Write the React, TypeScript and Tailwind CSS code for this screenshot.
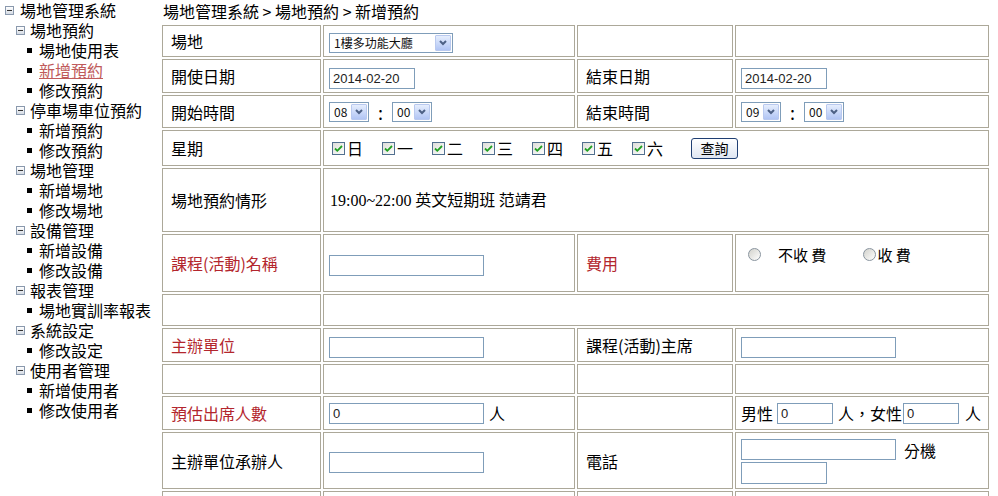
import React from 'react';

type TreeNode = { label: string; level: 0 | 1 | 2; active?: boolean };

const tree: TreeNode[] = [
  { label: '場地管理系統', level: 0 },
  { label: '場地預約', level: 1 },
  { label: '場地使用表', level: 2 },
  { label: '新增預約', level: 2, active: true },
  { label: '修改預約', level: 2 },
  { label: '停車場車位預約', level: 1 },
  { label: '新增預約', level: 2 },
  { label: '修改預約', level: 2 },
  { label: '場地管理', level: 1 },
  { label: '新增場地', level: 2 },
  { label: '修改場地', level: 2 },
  { label: '設備管理', level: 1 },
  { label: '新增設備', level: 2 },
  { label: '修改設備', level: 2 },
  { label: '報表管理', level: 1 },
  { label: '場地實訓率報表', level: 2 },
  { label: '系統設定', level: 1 },
  { label: '修改設定', level: 2 },
  { label: '使用者管理', level: 1 },
  { label: '新增使用者', level: 2 },
  { label: '修改使用者', level: 2 },
];

const weekdays = ['日', '一', '二', '三', '四', '五', '六'];

function MinusBox() {
  return (
    <span className="flex h-[9px] w-[9px] shrink-0 items-center justify-center border border-[#8a99ad] bg-linear-to-b from-white to-[#d5dbe4]">
      <span className="h-px w-[5px] bg-[#333]" />
    </span>
  );
}

function XpSelect({ value, wide }: { value: string; wide?: boolean }) {
  return (
    <span
      className={
        'inline-flex h-[20px] items-center border border-[#7f9db9] bg-white align-middle ' +
        (wide ? 'w-[124px]' : 'w-[40px]')
      }
    >
      <span className="flex-1 pl-[4px] text-[12px] leading-none text-[#111]">{value}</span>
      <span className="mr-px flex h-[16px] w-[16px] items-center justify-center rounded-[1px] border border-[#b9c9ef] bg-linear-to-b from-[#e6eefd] to-[#b1c5f4]">
        <svg width="8" height="6" viewBox="0 0 8 6">
          <path d="M1 1 L4 4 L7 1" fill="none" stroke="#4d6185" strokeWidth="2" />
        </svg>
      </span>
    </span>
  );
}

function TextBox({ value = '', size }: { value?: string; size: 'lg' | 'md' | 'sm' }) {
  const w = size === 'lg' ? 'w-[155px]' : size === 'md' ? 'w-[86px]' : 'w-[56px]';
  return (
    <input
      readOnly
      defaultValue={value}
      className={`${w} h-[21px] border border-[#7f9db9] bg-white px-[3px] align-middle font-['Liberation_Sans',sans-serif] text-[13px] text-[#222] outline-none`}
    />
  );
}

function CheckBox() {
  return (
    <svg width="13" height="13" viewBox="0 0 13 13" className="shrink-0">
      <defs>
        <linearGradient id="cbg" x1="0" y1="0" x2="1" y2="1">
          <stop offset="0" stopColor="#dcdcd7" />
          <stop offset="1" stopColor="#ffffff" />
        </linearGradient>
      </defs>
      <rect x="0.5" y="0.5" width="12" height="12" fill="url(#cbg)" stroke="#52708f" />
      <path d="M3 6.5 L5.3 8.8 L10 4" fill="none" stroke="#21a121" strokeWidth="1.8" />
    </svg>
  );
}

function Radio() {
  return (
    <span className="inline-block h-[13px] w-[13px] shrink-0 rounded-full border border-[#8a959f] bg-linear-to-br from-[#d2d2cc] to-white" />
  );
}

const cell = 'border border-[#aca899] p-0';
const lbl = `${cell} pl-[8px] align-middle`;
const red = `${lbl} text-[#b3262d]`;
const val = `${cell} pl-[5px] align-middle`;

export default function App() {
  return (
    <div className="flex min-h-[496px] bg-white font-['Noto_Sans_CJK_TC',sans-serif] text-[16px] text-black">
      <aside className="w-[160px] shrink-0">
        {tree.map((n, i) => (
          <div key={i} className="flex h-[20px] items-center leading-[20px]">
            {n.level === 0 && (
              <span className="flex items-center pl-[5px]">
                <MinusBox />
                <span className="ml-[6px]">{n.label}</span>
              </span>
            )}
            {n.level === 1 && (
              <span className="flex items-center pl-[16px]">
                <MinusBox />
                <span className="ml-[5px]">{n.label}</span>
              </span>
            )}
            {n.level === 2 && (
              <span className="flex items-center pl-[27px]">
                <span className="h-[5px] w-[5px] bg-black" />
                <span className={'ml-[7px] ' + (n.active ? 'text-[#c05b5b] underline' : '')}>
                  {n.label}
                </span>
              </span>
            )}
          </div>
        ))}
      </aside>

      <main className="flex-1">
        <div className="h-[23px] pl-[3px] pt-[1px] leading-[20px]">場地管理系統 &gt; 場地預約 &gt; 新增預約</div>
        <table className="w-[831px] table-fixed border-separate border-spacing-[2px]">
          <tbody>
            <tr className="h-[32px]">
              <td className={`${lbl} w-[159px]`}>場地</td>
              <td className={`${val} w-[252px]`}>
                <XpSelect value="1樓多功能大廳" wide />
              </td>
              <td className={`${lbl} w-[156px]`} />
              <td className={`${val} w-[254px]`} />
            </tr>
            <tr className="h-[34px]">
              <td className={lbl}>開使日期</td>
              <td className={val}>
                <TextBox value="2014-02-20" size="md" />
              </td>
              <td className={lbl}>結束日期</td>
              <td className={val}>
                <TextBox value="2014-02-20" size="md" />
              </td>
            </tr>
            <tr className="h-[33px]">
              <td className={lbl}>開始時間</td>
              <td className={val}>
                <span className="flex items-center">
                  <XpSelect value="08" />
                  <span className="mx-[9px] text-[18px] leading-none">:</span>
                  <XpSelect value="00" />
                </span>
              </td>
              <td className={lbl}>結束時間</td>
              <td className={val}>
                <span className="flex items-center">
                  <XpSelect value="09" />
                  <span className="mx-[9px] text-[18px] leading-none">:</span>
                  <XpSelect value="00" />
                </span>
              </td>
            </tr>
            <tr className="h-[36px]">
              <td className={lbl}>星期</td>
              <td className={`${val} pl-[8px]`} colSpan={3}>
                <span className="flex items-center">
                  {weekdays.map((d) => (
                    <span key={d} className="mr-[20px] flex w-[30px] items-center">
                      <CheckBox />
                      <span className="ml-[2px] leading-none">{d}</span>
                    </span>
                  ))}
                  <button className="ml-[9px] h-[21px] w-[47px] rounded-[3px] border border-[#1f3f73] bg-linear-to-b from-white to-[#dfe6f2] text-[14px] leading-none">
                    查詢
                  </button>
                </span>
              </td>
            </tr>
            <tr className="h-[64px]">
              <td className={lbl}>場地預約情形</td>
              <td className={`${val} pl-[6px]`} colSpan={3}>
                <span className="font-['Liberation_Serif',serif] text-[16px]">19:00~22:00</span> 英文短期班 范靖君
              </td>
            </tr>
            <tr className="h-[58px]">
              <td className={red}>課程(活動)名稱</td>
              <td className={val}>
                <TextBox size="lg" />
              </td>
              <td className={red}>費用</td>
              <td className={`${cell} pl-[12px] pt-[12px] align-top`}>
                <span className="flex items-center text-[15px] leading-none">
                  <Radio />
                  <span className="ml-[17px]">不收 費</span>
                  <span className="ml-[37px]">
                    <Radio />
                  </span>
                  <span className="ml-[1px]">收 費</span>
                </span>
              </td>
            </tr>
            <tr className="h-[32px]">
              <td className={lbl} />
              <td className={val} colSpan={3} />
            </tr>
            <tr className="h-[34px]">
              <td className={red}>主辦單位</td>
              <td className={val}>
                <TextBox size="lg" />
              </td>
              <td className={lbl}>課程(活動)主席</td>
              <td className={val}>
                <TextBox size="lg" />
              </td>
            </tr>
            <tr className="h-[30px]">
              <td className={lbl} />
              <td className={val} />
              <td className={lbl} />
              <td className={val} />
            </tr>
            <tr className="h-[34px]">
              <td className={red}>預估出席人數</td>
              <td className={val}>
                <span className="flex items-center">
                  <TextBox value="0" size="lg" />
                  <span className="ml-[5px]">人</span>
                </span>
              </td>
              <td className={lbl} />
              <td className={val}>
                <span className="flex items-center whitespace-nowrap">
                  <span className="mr-[4px]">男性</span>
                  <TextBox value="0" size="sm" />
                  <span className="ml-[5px] mr-[1px]">人，女性</span>
                  <TextBox value="0" size="sm" />
                  <span className="ml-[6px]">人</span>
                </span>
              </td>
            </tr>
            <tr className="h-[57px]">
              <td className={lbl}>主辦單位承辦人</td>
              <td className={val}>
                <TextBox size="lg" />
              </td>
              <td className={lbl}>電話</td>
              <td className={val}>
                <div className="flex items-center">
                  <TextBox size="lg" />
                  <span className="ml-[8px]">分機</span>
                </div>
                <div className="flex">
                  <input
                    readOnly
                    className="h-[22px] w-[86px] border border-[#7f9db9] bg-white outline-none"
                  />
                </div>
              </td>
            </tr>
            <tr className="h-[40px]">
              <td className={lbl} />
              <td className={val} />
              <td className={lbl} />
              <td className={val} />
            </tr>
          </tbody>
        </table>
      </main>
    </div>
  );
}
